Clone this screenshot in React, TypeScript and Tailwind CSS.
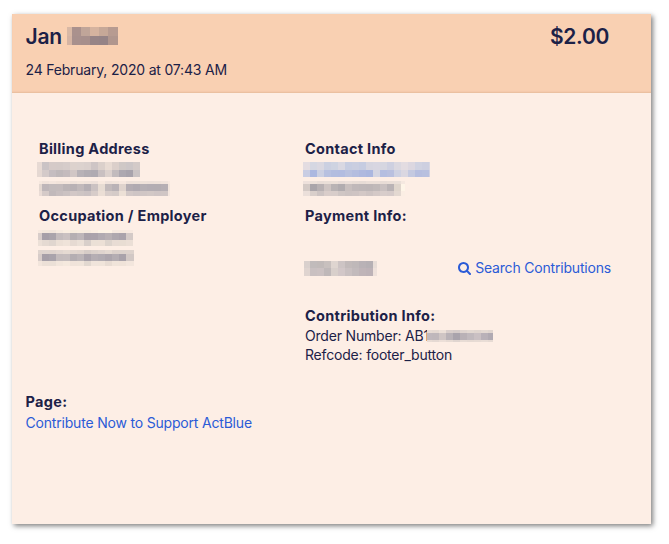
import type { ReactNode } from 'react'

type MosaicRow = { height: number; colors: string }

// Pixelated block that hides a private value. `first` and `last` are the
// widths of the edge cells, every other cell is `cell` wide.
function Mosaic({
  first,
  last,
  cell = 7,
  rows,
  className = '',
}: {
  first: number
  last: number
  cell?: number
  rows: MosaicRow[]
  className?: string
}) {
  const count = rows[0].colors.split(' ').length
  const width = first + last + (count - 2) * cell
  const height = rows.reduce((sum, r) => sum + r.height, 0)

  return (
    <svg
      width={width}
      height={height}
      shapeRendering="crispEdges"
      className={`block shrink-0 ${className}`}
      aria-label="Redacted"
    >
      {rows.map((row, r) => {
        const y = rows.slice(0, r).reduce((sum, p) => sum + p.height, 0)
        return row.colors.split(' ').map((c, i) => (
          <rect
            key={`${r}-${i}`}
            x={i === 0 ? 0 : first + (i - 1) * cell}
            y={y}
            width={i === 0 ? first : i === count - 1 ? last : cell}
            height={row.height}
            fill={`#${c}`}
          />
        ))
      })}
    </svg>
  )
}

const nameRows = [
  { height: 9, colors: 'd8b8a5 aa918d c0a599 d5b39f c6a898 b79b91' },
  { height: 9, colors: 'd5b4a3 a8908d a78f8c 978486 958386 b0968e' },
]

const streetRows = [
  { height: 8, colors: 'e7dad4 cac3c5 d5cac8 d4cac8 d6ccca ddd2cd dcd2ce dad0cd cec5c5 dbd0cb e8dbd3 dbcfca cfc8c6 ccc6c7 d3cac8' },
  { height: 7, colors: 'e5d8d2 d4cac9 c5bdc0 bfb8ba c4bbbd d1c6c5 b8b2b7 b2adb3 b0abb2 c9c0c1 dcd1cd c2bbbd ada8b0 a8a3ac cac3c4' },
]

const cityRows = [
  { height: 3, colors: 'f6e8df f1e3db f4e6de f2e4db f3e5dc efe2db f2e5dc f0e3db eee1da f8e9df efe2db f1e4db f6e7df eee1da eee2da efe2da eee1da efe2da f1e4dc f8e9e0' },
  { height: 7, colors: 'e3d7d0 beb6b9 c2bbbc c3bbbc bbb4b6 b8b1b5 c1b9bb b5afb4 cbc2c2 e7dcd3 c2babb b9b2b6 dfd3cd b4adb3 b0aab1 b5afb4 b3adb3 b3adb2 b6afb4 f2e5dc' },
  { height: 5, colors: 'e9dbd5 d5cac8 c1b9bb c7bebf cbc2c2 d2c7c6 cec5c4 cbc2c3 d7ccc9 ebded5 d8cdca d5cbc8 ece0d6 d2c8c7 cec5c5 d0c6c5 d2c8c6 cfc5c5 d0c6c5 f5e7df' },
]

const occupationRows = [
  { height: 3, colors: 'f7e9df f3e7dc f1e5db f6eadf faeee1 f6ebdd f7ecdf f6ebdf faeee2 fcf3e5 fdf3e5 f5e9df f6e9de f7e9e0' },
  { height: 7, colors: 'd8cdca a69fa8 aaa4ab c4bcbd cac1c1 b5afb2 bdb6b9 a9a2aa aaa3ab b1abb1 b8b1b4 aea8ae aaa3ab d4cac7' },
  { height: 6, colors: 'ece0d7 e5dad2 e0d6cf ece0d6 efe3d9 e6dad2 ebe0d7 d8cfca ebe0d6 ece0d6 ddd4cd e8dcd4 e8ddd3 ebdfd6' },
]

const employerRows = [
  { height: 4, colors: 'dfd4ce ded4cf ded3cd e1d6d0 e5dad2 e1d6cf dfd4cd d6ccc7 dbd1cb dfd4ce e4d9d1 dcd1cb dcd2cc ddd2cc' },
  { height: 7, colors: 'd7ccc9 a69fa8 a9a3ab c3bbbc c4bcbd b4aeb2 bbb4b7 a9a2aa b5aeb3 b1abb1 aca5ac b4adb2 a9a2aa d2c8c5' },
  { height: 5, colors: 'f2e5dc ece0d7 ebe0d7 f2e6dc f5e9de f0e3da f0e4da e2d8d0 f0e4db f0e4da e8dcd3 f0e4da f0e3d9 f3e6dd' },
]

const emailRows = [
  { height: 8, colors: 'e3dce1 d5d7e2 dad8e1 cbd0e1 ced3e1 d9d8e2 c7cde1 cacee0 c6cce1 d6d5e0 d8d6e1 d6d6e0 ced0e0 dbd8e0 e3dce1 dcd7e0 d0d2e1 cdcfe0 d9d7e2' },
  { height: 7, colors: 'c9cde3 acb8e0 ccd0e2 b8c1e0 b3bddf b2bce0 b9c1df b4bddf afb9df abb7df d4d5e2 b5bee0 b9c0df ced1e2 dad7e1 c4c9e0 b6bedf b8c0df d1d1e1' },
]

const phoneRows = [
  { height: 3, colors: 'eee1dc ede1da e9ddd7 eadfd8 ece0d8 e8dcd7 ebdfd9 e9ddd6 e7dcd6 ebdfd8 ebdfd8 e8dcd6 eaded7 eadfd8 f5e8e0' },
  { height: 7, colors: 'd4cac6 aaa5aa b8b1b3 cec4c2 b9b3b4 b1acaf c8bfbe c0b8b9 beb7b8 bdb6b7 c0b9b9 c9c0c0 bab3b5 dfd5cc fef5e8' },
  { height: 5, colors: 'ebdfda d9cfcb cdc4c3 d9cdca d8cdca cfc6c4 ccc3c2 cec4c3 d3c8c6 cec4c3 d4c9c7 d8cdcb d6cbca e3d8d1 fbeee4' },
]

const cardRows = [
  { height: 7, colors: 'd9d0cd c1bbbb c1bab9 c8c0be dfd5d0 cdc4c4 c2baba bfb8b9 b9b2b6 b6b0b4 e8ddd7' },
  { height: 8, colors: 'dfd4d0 c9c0c1 cbc1c2 bfb8b9 d8cfcb d2c7c8 c9c0c1 c2babc bfb4b8 bdb2b7 eee1db' },
]

const orderRows = [
  { height: 3, colors: 'e7dbd4 e5d9d2 ece0d8 d9cecb d5cbc9 dfd4cf e3d8d1 e0d5cf e4d9d2 e0d5cf' },
  { height: 7, colors: 'c0b8bd bfb7bb cfc5c4 b9b2b7 a9a3ac b9b1b6 c1b9bd cac0c3 b9b1b8 b1aab2' },
  { height: 2, colors: 'e8dcd5 e5d9d3 ecdfd8 e7dbd4 e0d5d0 e8dcd5 e6dad3 e7dbd4 e9ddd6 e6dad3' },
]

function SearchIcon() {
  return (
    <svg viewBox="64 128 1664 1664" className="size-[13px]" fill="currentColor">
      <path d="M1216 832q0-185-131.5-316.5t-316.5-131.5-316.5 131.5-131.5 316.5 131.5 316.5 316.5 131.5 316.5-131.5 131.5-316.5zm512 832q0 52-38 90t-90 38q-54 0-90-38l-343-342q-179 124-399 124-143 0-273.5-55.5t-225-150-150-225-55.5-273.5 55.5-273.5 150-225 225-150 273.5-55.5 273.5 55.5 225 150 150 225 55.5 273.5q0 220-124 399l343 343q37 37 37 90z" />
    </svg>
  )
}

function Heading({ children, className = '' }: { children: ReactNode; className?: string }) {
  return (
    <h2 className={`whitespace-nowrap text-[14.5px] leading-5 font-bold tracking-[0.3px] ${className}`}>{children}</h2>
  )
}

export default function App() {
  return (
    <div className="h-[544px] w-[669px] bg-white pt-[14px] pl-3 font-['Inter','Liberation_Sans',sans-serif] text-[14px] tracking-[-0.19px] text-[#1c2147]">
      <article className="h-[510px] w-[639px] overflow-hidden bg-[#fdeee5] shadow-[2px_2px_5px_rgba(0,0,0,0.5)]">
        <header className="h-[79px] bg-[#f9d0b2] pt-[11px] pr-[42px] pl-[13.5px] shadow-[inset_0_-2px_2px_-1px_rgba(130,70,30,0.15)]">
          <div className="flex items-center justify-between text-[21px] leading-6 font-semibold">
            <div className="flex items-center">
              <h1 className="w-[41.5px]">Jan</h1>
              <Mosaic first={5} last={10} cell={9} rows={nameRows} className="mb-0.5" />
            </div>
            <span className="tracking-[-0.3px]">$2.00</span>
          </div>
          <p className="mt-[11px] leading-5">24 February, 2020 at 07:43 AM</p>
        </header>

        <div className="pt-[46px] pl-[27px]">
          <div className="flex">
            <section className="w-[266px]">
              <Heading>Billing Address</Heading>
              <Mosaic first={5} last={7} rows={streetRows} className="mt-[3px] -ml-[2px]" />
              <Mosaic first={3} last={2} rows={cityRows} className="mt-1" />
              <Heading className="mt-[10px]">Occupation / Employer</Heading>
              <Mosaic first={4} last={7} rows={occupationRows} className="mt-1 -ml-px" />
              <Mosaic first={4} last={8} rows={employerRows} className="mt-1 -ml-px" />
            </section>

            <section className="w-[306px]">
              <Heading>Contact Info</Heading>
              <Mosaic first={7} last={1} rows={emailRows} className="mt-[3px] -ml-[2px]" />
              <Mosaic first={7} last={4} rows={phoneRows} className="mt-1 -ml-[2px]" />
              <Heading className="mt-[10px]">Payment Info:</Heading>
              <div className="mt-8 flex h-5 items-center justify-between">
                <Mosaic first={6} last={4} rows={cardRows} className="-ml-px" />
                <a href="#search" className="flex items-center gap-1 leading-5 text-[#2b5bd7]">
                  <SearchIcon />
                  Search Contributions
                </a>
              </div>
              <Heading className="mt-7">Contribution Info:</Heading>
              <div className="flex h-5 items-center leading-5">
                <span className="w-[122px] whitespace-nowrap">Order Number: AB1</span>
                <Mosaic first={5} last={5} rows={orderRows} className="relative" />
              </div>
              <p className="-mt-px leading-5">Refcode: footer_button</p>
            </section>
          </div>

          <section className="-ml-[13.5px] mt-[27px]">
            <Heading>Page:</Heading>
            <a href="#page" className="mt-px block leading-5 text-[#2b5bd7]">
              Contribute Now to Support ActBlue
            </a>
          </section>
        </div>
      </article>
    </div>
  )
}
